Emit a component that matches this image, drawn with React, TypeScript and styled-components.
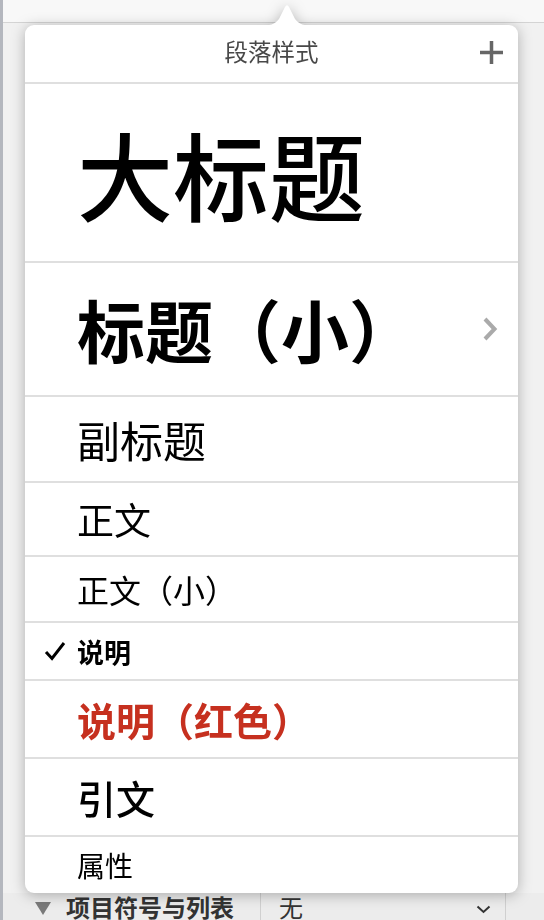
import React from 'react';
import styled, { createGlobalStyle } from 'styled-components';

const GlobalStyle = createGlobalStyle`
  html, body {
    margin: 0;
    padding: 0;
    background: #f1f1f1;
  }
  body {
    font-family: "Noto Sans CJK SC", "Noto Sans", sans-serif;
  }
`;

const Inspector = styled.div`
  position: relative;
  width: 544px;
  height: 920px;
  display: flex;
  flex-direction: column;
  border-left: 3px solid #b4b7be;
  box-sizing: border-box;
  overflow: hidden;
  background: #f1f1f1;
`;

const TabBar = styled.div`
  height: 22px;
  flex-shrink: 0;
  background: #f8f8f8;
  border-bottom: 1px solid #d4d4d4;
`;

const PanelBody = styled.div`
  flex: 1;
`;

const SectionRow = styled.div`
  height: 27px;
  flex-shrink: 0;
  display: flex;
  align-items: flex-start;
  background: #ececec;
  color: #333;
  font-size: 24px;
  line-height: 27px;
`;

const Disclosure = styled.span`
  width: 0;
  height: 0;
  margin: 9px 0 0 32px;
  border-left: 8px solid transparent;
  border-right: 8px solid transparent;
  border-top: 13px solid #7a7a7a;
`;

const SectionLabel = styled.span`
  margin-left: 15px;
  font-weight: 700;
  width: 194px;
  white-space: nowrap;
`;

const ValueBox = styled.div`
  flex: 0 0 246px;
  height: 27px;
  display: flex;
  align-items: flex-start;
  justify-content: space-between;
  border-left: 1px solid #d0d0d0;
  border-right: 1px solid #d0d0d0;
  padding: 0 14px 0 18px;
  box-sizing: border-box;

  svg {
    margin-top: 12px;
  }
`;

const Popover = styled.div`
  position: absolute;
  left: 22px;
  top: 25px;
  width: 493px;
  height: 868px;
  background: #fff;
  border-radius: 9px;
  filter: drop-shadow(0 2px 7px rgba(0, 0, 0, 0.28));
  display: flex;
  flex-direction: column;
`;

const Arrow = styled.svg`
  position: absolute;
  left: 235px;
  top: -23px;
`;

const Header = styled.div`
  height: 59px;
  flex-shrink: 0;
  display: flex;
  align-items: center;
  justify-content: center;
  position: relative;
  box-sizing: border-box;
  padding-bottom: 6px;
  border-bottom: 2px solid #dfdfdf;
  font-size: 23.5px;
  color: #484848;
`;

const AddButton = styled.svg`
  position: absolute;
  right: 15px;
  top: 16px;
`;

const StyleRow = styled.div<{ $h: number; $last?: boolean }>`
  height: ${(p) => p.$h}px;
  flex-shrink: 0;
  display: flex;
  align-items: center;
  position: relative;
  padding-left: 52px;
  border-bottom: ${(p) => (p.$last ? 'none' : '2px solid #dfdfdf')};
`;

const StyleName = styled.span<{ $size: number; $weight?: number; $color?: string }>`
  font-size: ${(p) => p.$size}px;
  font-weight: ${(p) => p.$weight ?? 400};
  color: ${(p) => p.$color ?? '#000'};
  line-height: 1;
  white-space: nowrap;
`;

const Check = styled.svg`
  position: absolute;
  left: 19px;
  top: 50%;
  transform: translateY(-50%);
`;

const Chevron = styled.svg`
  position: absolute;
  right: 20px;
  top: 50%;
  transform: translateY(-50%);
`;

type StyleItem = {
  name: string;
  h: number;
  size: number;
  weight?: number;
  color?: string;
  checked?: boolean;
  more?: boolean;
};

const styles: StyleItem[] = [
  { name: '大标题', h: 177, size: 96, weight: 500 },
  { name: '标题（小）', h: 132, size: 68, weight: 700, more: true },
  { name: '副标题', h: 84, size: 43 },
  { name: '正文', h: 72, size: 37 },
  { name: '正文（小）', h: 64, size: 32 },
  { name: '说明', h: 56, size: 27, weight: 700, checked: true },
  { name: '说明（红色）', h: 76, size: 39, weight: 700, color: '#c6301f' },
  { name: '引文', h: 76, size: 39, weight: 500 },
  { name: '属性', h: 56, size: 28 },
];

export default function App() {
  return (
    <>
      <GlobalStyle />
      <Inspector>
        <TabBar />
        <PanelBody />
        <SectionRow>
          <Disclosure />
          <SectionLabel>项目符号与列表</SectionLabel>
          <ValueBox>
            <span>无</span>
            <svg width="15" height="9" viewBox="0 0 15 9">
              <path d="M1.5 1.5 L7.5 7 L13.5 1.5" fill="none" stroke="#333" strokeWidth="2" />
            </svg>
          </ValueBox>
        </SectionRow>

        <Popover>
          <Arrow width="54" height="25" viewBox="0 0 54 25">
            <path
              d="M0 24 C10 24 15 22 19 17 L25 5 Q27 1.5 29 5 L35 17 C39 22 44 24 54 24 L54 25 L0 25 Z"
              fill="#fff"
            />
          </Arrow>
          <Header>
            段落样式
            <AddButton width="23" height="23" viewBox="0 0 23 23">
              <path d="M11.5 0 V23 M0 11.5 H23" stroke="#666" strokeWidth="3.5" />
            </AddButton>
          </Header>
          {styles.map((s, i) => (
            <StyleRow key={s.name} $h={s.h} $last={i === styles.length - 1}>
              {s.checked && (
                <Check width="22" height="20" viewBox="0 0 22 20">
                  <path d="M2 11 L8 17.5 L20 2" fill="none" stroke="#000" strokeWidth="3" />
                </Check>
              )}
              <StyleName $size={s.size} $weight={s.weight} $color={s.color}>
                {s.name}
              </StyleName>
              {s.more && (
                <Chevron width="16" height="24" viewBox="0 0 16 24">
                  <path d="M3 2 L12.5 12 L3 22" fill="none" stroke="#aaa" strokeWidth="4" />
                </Chevron>
              )}
            </StyleRow>
          ))}
        </Popover>
      </Inspector>
    </>
  );
}
